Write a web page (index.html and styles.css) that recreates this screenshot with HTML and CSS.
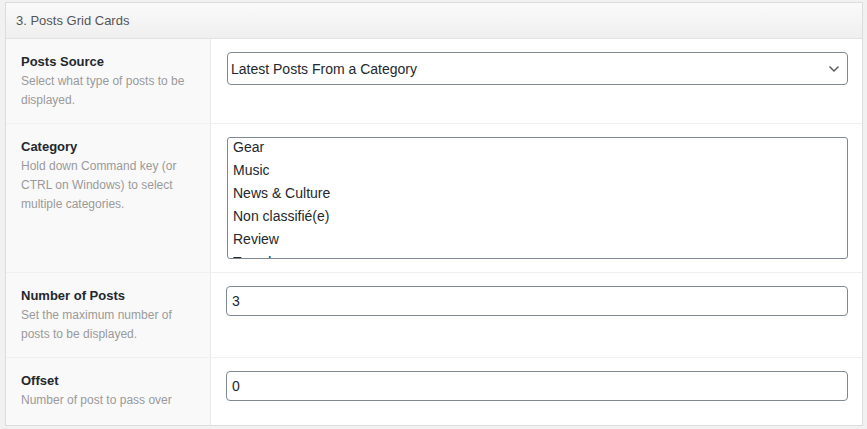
FILE: index.html
```html
<!DOCTYPE html>
<html lang="en">
<head>
    <meta charset="UTF-8">
    <title>Posts Grid Cards</title>
    <link rel="stylesheet" href="styles.css">
</head>
<body>
    <div class="panel">
        <div class="panel-head">3. Posts Grid Cards</div>

        <div class="row">
            <div class="label">
                <div class="title">Posts Source</div>
                <div class="desc">Select what type of posts to be displayed.</div>
            </div>
            <div class="field">
                <div class="select-wrap">
                    <select class="select">
                        <option>Latest Posts From a Category</option>
                    </select>
                    <svg class="chevron" width="12" height="8" viewBox="0 0 12 8">
                        <path d="M1.5 1.5 L6 6 L10.5 1.5" fill="none" stroke="#555" stroke-width="1.4"/>
                    </svg>
                </div>
            </div>
        </div>

        <div class="row">
            <div class="label">
                <div class="title">Category</div>
                <div class="desc">Hold down Command key (or CTRL on Windows) to select multiple categories.</div>
            </div>
            <div class="field">
                <div class="listbox">
                    <div class="opt">Gear</div>
                    <div class="opt">Music</div>
                    <div class="opt">News &amp; Culture</div>
                    <div class="opt">Non classifié(e)</div>
                    <div class="opt">Review</div>
                    <div class="opt">Travel</div>
                </div>
            </div>
        </div>

        <div class="row">
            <div class="label">
                <div class="title">Number of Posts</div>
                <div class="desc">Set the maximum number of posts to be displayed.</div>
            </div>
            <div class="field">
                <input class="text" type="text" value="3">
            </div>
        </div>

        <div class="row last">
            <div class="label">
                <div class="title">Offset</div>
                <div class="desc">Number of post to pass over</div>
            </div>
            <div class="field">
                <input class="text" type="text" value="0">
            </div>
        </div>
    </div>
</body>
</html>
```

FILE: styles.css
```css
body {
    margin: 0;
    padding: 2px 0 0 5px;
    background-color: #f1f1f1;
    font-family: "Liberation Sans", Arial, sans-serif;
    color: #23282d;
}
.panel {
    width: 858px;
    box-sizing: border-box;
    border: 1px solid #dcdcdc;
    background-color: #fff;
}
.panel-head {
    height: 35px;
    line-height: 35px;
    padding-left: 10px;
    font-size: 13px;
    color: #555;
    background: linear-gradient(to bottom, #fafafa, #efefef);
    border-bottom: 1px solid #e2e2e2;
}
.row {
    display: grid;
    grid-template-columns: 205px 1fr;
    border-bottom: 1px solid #f0f0f0;
}
.row.last {border-bottom: none;}
.label {
    background-color: #f9f9f9;
    border-right: 1px solid #e8e8e8;
    padding: 13px 15px 13px 15px;
}
.row.last .label {padding-bottom: 15px;}
.title {
    font-size: 13px;
    font-weight: bold;
    line-height: 20px;
    color: #23282d;
}
.desc {
    font-size: 12px;
    line-height: 19px;
    color: #9a9a9a;
}
.field {
    padding: 13px 14px 13px 15px;
}
.select-wrap {
    position: relative;
    margin-left: 1px;
}
.select {
    appearance: none;
    -webkit-appearance: none;
    width: 100%;
    height: 33px;
    box-sizing: border-box;
    border: 1px solid #7e8993;
    border-radius: 4px;
    background-color: #fff;
    padding: 0 24px 0 3px;
    font-family: "Liberation Sans", Arial, sans-serif;
    font-size: 14px;
    color: #23282d;
}
.chevron {
    position: absolute;
    right: 8px;
    top: 13px;
}
.listbox {
    margin-left: 1px;
    height: 122px;
    box-sizing: border-box;
    border: 1px solid #7e8993;
    border-radius: 3px;
    overflow: hidden;
    padding: 0 5px;
}
.opt {
    font-size: 14px;
    line-height: 23px;
    color: #23282d;
}
.opt:first-child {margin-top: -2px;}
.text {
    display: block;
    width: 100%;
    height: 30px;
    box-sizing: border-box;
    border: 1px solid #7e8993;
    border-radius: 4px;
    padding: 0 5px;
    font-family: "Liberation Sans", Arial, sans-serif;
    font-size: 14px;
    color: #23282d;
}
```
